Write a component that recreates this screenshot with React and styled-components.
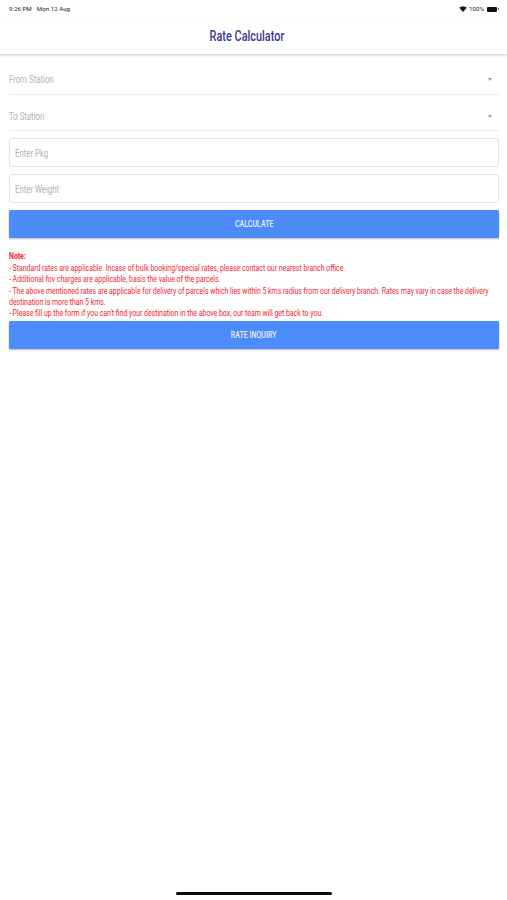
import React from "react";
import styled, { createGlobalStyle } from "styled-components";

const Global = createGlobalStyle`
  html, body { margin: 0; padding: 0; background: #fff; }
  body { font-family: Roboto, "Liberation Sans", sans-serif; }
`;
const Page = styled.div`
  width: 507px; height: 900px; position: relative; overflow: hidden; background: #fff;
  display: flex; flex-direction: column;
`;
const StatusBar = styled.div`
  height: 18px; padding: 0 8px 0 9px; display: flex; align-items: center; justify-content: space-between;
  font-size: 6.2px; color: #222; box-sizing: border-box;
`;
const StatusLeft = styled.div`display: flex; gap: 5px;`;
const StatusRight = styled.div`display: flex; align-items: center; gap: 2px;`;
const Battery = styled.span`
  display: block; width: 10px; height: 5px; background: #111; border-radius: 1px; position: relative;
  margin: 0 2px 0 1px;
  &::after { content: ""; position: absolute; right: -1.5px; top: 1.5px; width: 1px; height: 2px; background: #555; }
`;
const Header = styled.header`
  height: 36px; display: flex; align-items: center; justify-content: center; padding-right: 14px;
  border-bottom: 1px solid #dcdcdc; box-shadow: 0 1px 2px rgba(0,0,0,.12);
`;
const Title = styled.h1`
  margin: 0; font-size: 14px; font-weight: 500; color: #40368f; transform: scaleX(.78);
`;
const Form = styled.main`
  display: flex; flex-direction: column; padding: 7px 8px 0 9px;
`;
const SelectRow = styled.div`
  height: ${p => p.$h}px; display: flex; align-items: center; justify-content: space-between;
  border-bottom: 1px solid #ebebeb; box-sizing: border-box; padding: ${p => p.$pt}px 7px 0 0;
`;
const Hint = styled.span`
  font-size: 10px; color: #b2b2b2; display: inline-block; transform: scaleX(.78); transform-origin: left center;
`;
const Caret = styled.span`
  width: 0; height: 0; border-left: 2.5px solid transparent; border-right: 2.5px solid transparent;
  border-top: 3.5px solid #999;
`;
const InputBox = styled.div`
  height: 29px; margin-top: 7px; border: 1px solid #e2e2e2; border-radius: 3px; box-sizing: border-box;
  display: flex; align-items: center; padding: 2px 0 0 5px;
`;
const Button = styled.button`
  height: 28px; margin-top: ${p => p.$mt}px; width: 100%; border: 0; border-radius: 1.5px; background: #4c8bfb; color: #e8efff;
  font-family: inherit; font-size: 8.5px; font-weight: 500; padding: 0; flex: none;
  box-shadow: 0 1px 2px rgba(0,0,0,.28);
`;
const ButtonLabel = styled.span`display: inline-block; transform: scaleX(.83);`;
const Note = styled.div`
  margin-top: 13px; color: #f5222d; font-size: 8.5px; line-height: 11.2px; width: 600px;
  transform: scaleX(.813); transform-origin: left top;
`;
const NoteTitle = styled.strong`display: block; font-weight: 700; margin-bottom: 1px;`;
const NoteLine = styled.div``;
const HomeBar = styled.div`
  position: absolute; left: 176px; bottom: 5px; width: 156px; height: 3px; border-radius: 2px; background: #0a0a0a;
`;

export default function App() {
  return (
    <Page>
      <Global />
      <StatusBar>
        <StatusLeft><span>9:26 PM</span><span>Mon 12 Aug</span></StatusLeft>
        <StatusRight>
          <svg width="8" height="6" viewBox="0 0 16 12"><path d="M8 12 L0.5 3.5 C4.5 0 11.5 0 15.5 3.5 Z" fill="#111"/></svg>
          <span>100%</span>
          <Battery />
        </StatusRight>
      </StatusBar>
      <Header><Title>Rate Calculator</Title></Header>
      <Form>
        <SelectRow $h={33} $pt={2}><Hint>From Station</Hint><Caret /></SelectRow>
        <SelectRow $h={36} $pt={7}><Hint>To Station</Hint><Caret /></SelectRow>
        <InputBox><Hint>Enter Pkg</Hint></InputBox>
        <InputBox><Hint>Enter Weight</Hint></InputBox>
        <Button $mt={7}><ButtonLabel>CALCULATE</ButtonLabel></Button>
        <Note>
          <NoteTitle>Note:</NoteTitle>
          <NoteLine>- Standard rates are applicable. Incase of bulk booking/special rates, please contact our nearest branch office.</NoteLine>
          <NoteLine>- Additional fov charges are applicable, basis the value of the parcels.</NoteLine>
          <NoteLine>- The above mentioned rates are applicable for delivery of parcels which lies within 5 kms radius from our delivery branch. Rates may vary in case the delivery destination is more than 5 kms.</NoteLine>
          <NoteLine>- Please fill up the form if you can't find your destination in the above box, our team will get back to you.</NoteLine>
        </Note>
        <Button $mt={2}><ButtonLabel>RATE INQUIRY</ButtonLabel></Button>
      </Form>
      <HomeBar />
    </Page>
  );
}
